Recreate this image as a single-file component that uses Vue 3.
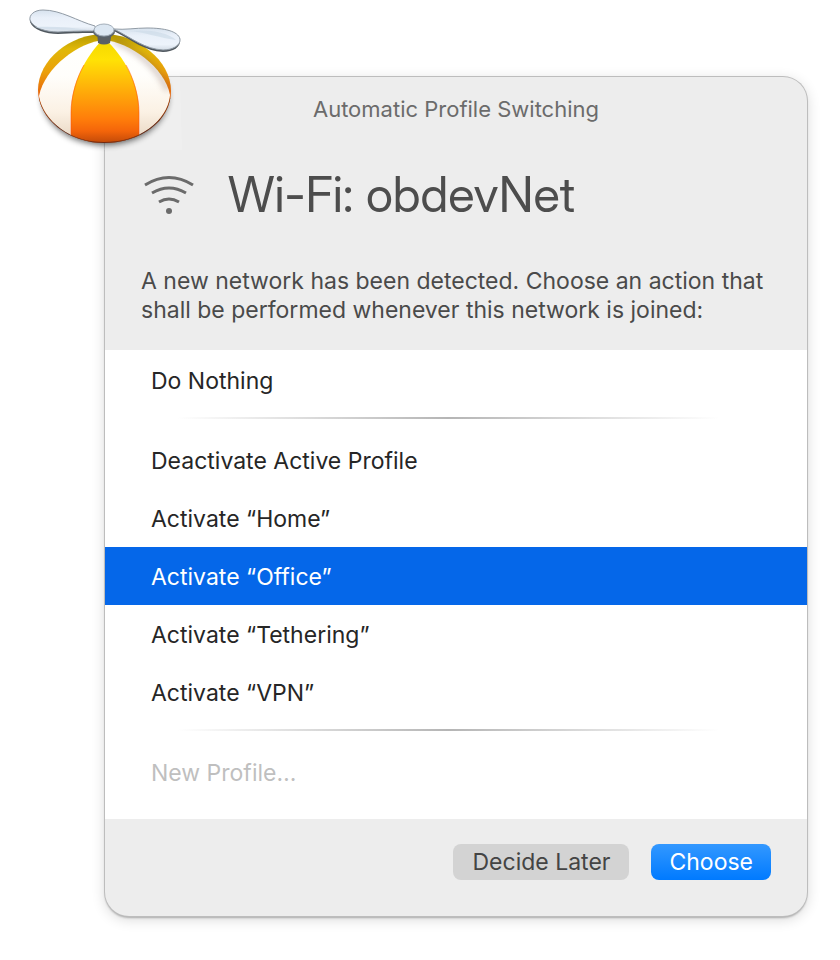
<script setup>
import { ref } from 'vue'

const groups = [
  [{ id: 'nothing', label: 'Do Nothing' }],
  [
    { id: 'deactivate', label: 'Deactivate Active Profile' },
    { id: 'home', label: 'Activate “Home”' },
    { id: 'office', label: 'Activate “Office”' },
    { id: 'tethering', label: 'Activate “Tethering”' },
    { id: 'vpn', label: 'Activate “VPN”' }
  ],
  [{ id: 'new', label: 'New Profile…', disabled: true }]
]

const selected = ref('office')
</script>

<template>
  <main class="desktop">
    <form class="dialog" @submit.prevent>
      <header class="dialog-header">
        <p class="caption">Automatic Profile Switching</p>
        <div class="network">
          <svg class="wifi" viewBox="0 0 52 42" aria-hidden="true">
            <g fill="none" stroke="#6b6b6b" stroke-width="3">
              <path d="M1 11 Q25 -4 49 11" />
              <path d="M8 19 Q25 9 42 19" />
              <path d="M15 28 Q25 22 35 28" />
            </g>
            <circle cx="25" cy="37" r="3" fill="#6b6b6b" />
          </svg>
          <h1>Wi-Fi: obdevNet</h1>
        </div>
        <p class="message">
          A new network has been detected. Choose an action that shall be performed whenever this network is joined:
        </p>
      </header>

      <div class="options" role="radiogroup" aria-label="Action">
        <div v-for="(group, index) in groups" :key="index" class="group">
          <label
            v-for="option in group"
            :key="option.id"
            class="option"
            :class="{ selected: selected === option.id, disabled: option.disabled }"
          >
            <input v-model="selected" type="radio" name="action" :value="option.id" :disabled="option.disabled">
            <span>{{ option.label }}</span>
          </label>
        </div>
      </div>

      <footer class="dialog-footer">
        <button type="button" class="btn">Decide Later</button>
        <button type="submit" class="btn primary">Choose</button>
      </footer>
    </form>

    <svg class="logo" viewBox="0 0 220 170" aria-hidden="true">
      <defs>
        <linearGradient id="stripe" x1="0" y1="0" x2="0" y2="1">
          <stop offset="0" stop-color="#f2d800" />
          <stop offset="0.2" stop-color="#ffe205" />
          <stop offset="0.45" stop-color="#ffb309" />
          <stop offset="0.75" stop-color="#ff7d0a" />
          <stop offset="0.86" stop-color="#f4650a" />
          <stop offset="1" stop-color="#b54208" />
        </linearGradient>
        <linearGradient id="side" x1="0" y1="0" x2="0" y2="1">
          <stop offset="0" stop-color="#ad9300" />
          <stop offset="0.15" stop-color="#e0b808" />
          <stop offset="0.35" stop-color="#eba00a" />
          <stop offset="0.55" stop-color="#e8640b" />
          <stop offset="1" stop-color="#6b3524" />
        </linearGradient>
        <linearGradient id="cream" x1="0" y1="0" x2="0" y2="1">
          <stop offset="0" stop-color="#ffffff" />
          <stop offset="0.35" stop-color="#fffefb" />
          <stop offset="0.7" stop-color="#fbf1e4" />
          <stop offset="1" stop-color="#e6d3be" />
        </linearGradient>
        <linearGradient id="blade" x1="0" y1="0" x2="0" y2="1">
          <stop offset="0" stop-color="#d7e2ee" />
          <stop offset="0.35" stop-color="#e9f0f9" />
          <stop offset="0.75" stop-color="#edf3fb" />
          <stop offset="1" stop-color="#d3dce6" />
        </linearGradient>
        <filter id="soft" x="-20%" y="-20%" width="140%" height="140%">
          <feGaussianBlur stdDeviation="3" />
        </filter>
        <clipPath id="dome">
          <path d="M104 34 C137 34 171 60 171 91 C171 121 140 143 104 143 C69 143 38 119 38 90 C38 60 70 34 104 34 Z" />
        </clipPath>
      </defs>
      <path d="M10 6 H178 L182 150 H16 Z" fill="#ffffff" opacity="0.15" />
      <ellipse cx="105" cy="97" rx="63" ry="48" fill="#000000" opacity="0.6" filter="url(#soft)" />
      <g clip-path="url(#dome)">
        <rect x="36" y="32" width="138" height="114" fill="url(#side)" />
        <path d="M104 40 C79 42 45 67 39 96 C43 120 70 143 104 143 C139 143 168 120 170 95 C165 67 129 42 104 40 Z" fill="url(#cream)" />
        <path d="M114 41 C135 48 158 67 168 90" fill="none" stroke="#725047" stroke-width="5" opacity="0.35" filter="url(#soft)" />
        <path d="M104 38 C85 57 71 84 71 112 L71 146 H139 V112 C139 84 125 57 104 38 Z" fill="url(#stripe)" />
        <path d="M71 134 V113 C71 96 77 77 84 65" fill="none" stroke="#ff4b0a" stroke-width="1" opacity="0.5" />
        <path d="M139 134 V113 C139 96 133 77 126 65" fill="none" stroke="#ff4b0a" stroke-width="1" opacity="0.5" />
        <path d="M38 98 C43 122 70 143 104 143 C140 143 167 122 171 98" fill="none" stroke="#4b1c16" stroke-width="2" opacity="0.7" />
      </g>
      <path d="M97 32 H112 L110 43 Q104 46 98 43 Z" fill="#5b6065" />
      <path d="M95 27 C77 21 61 11 43 11 C34 11 29 16 30 22 C33 30 46 34 58 34 C73 33 84 33 96 33 Z" fill="#4f575e" />
      <path d="M114 31 C133 41 145 51 163 52 C173 52 181 47 180 40 C178 32 164 29 147 29 C135 29 125 31 114 30 Z" fill="#4f575e" />
      <path d="M95 26 C77 21 61 10 43 10 C34 10 29 15 30 20 C33 28 46 32 58 32 C73 31 84 31 96 31 Z" fill="url(#blade)" stroke="#919ba5" stroke-width="1" />
      <path d="M114 29 C133 39 145 49 163 50 C173 50 181 45 180 39 C178 31 164 28 147 28 C135 28 125 30 114 29 Z" fill="url(#blade)" stroke="#919ba5" stroke-width="1" />
      <path d="M35 27 C48 31 68 29 90 30 C70 27 50 26 35 27 Z" fill="#cddbe8" opacity="0.7" />
      <path d="M128 31 C145 32 160 38 176 40 C168 32 148 29 128 31 Z" fill="#cddbe8" opacity="0.7" />
      <ellipse cx="104" cy="32" rx="11" ry="6" fill="#59626b" />
      <ellipse cx="104" cy="30" rx="10" ry="6" fill="#dce7f2" stroke="#a3aeb9" />
    </svg>
  </main>
</template>

<style>
body {
  margin: 0;
  background: #fff;
}
</style>

<style scoped>
.desktop {
  position: relative;
  padding: 77px 33px 43px 105px;
  font-family: Inter, "Liberation Sans", sans-serif;
  font-size: 23px;
  color: #262626;
}

.dialog {
  overflow: hidden;
  border-radius: 24px;
  background: #ededed;
  box-shadow: 0 0 0 1px #bdbdbd, 0 2px 2px rgba(0, 0, 0, 0.25), 0 3px 14px rgba(0, 0, 0, 0.16);
}

.dialog-header {
  padding: 18px 36px 25px;
}

p,
h1 {
  margin: 0;
}

.caption {
  text-align: center;
  font-size: 22px;
  line-height: 28px;
  color: #6b6b6b;
}

.network {
  display: flex;
  align-items: center;
  gap: 32px;
  margin: 40px 0;
  padding-left: 3px;
}

.wifi {
  width: 52px;
  height: 42px;
}

h1 {
  font-family: "Inter Display", Roboto, sans-serif;
  font-size: 49px;
  font-weight: 400;
  line-height: 64px;
  color: #4d4d4d;
}

.message {
  line-height: 29px;
  color: #4a4a4a;
}

.options {
  padding: 1px 0 18px;
  background: #fff;
}

.group + .group::before {
  content: "";
  display: block;
  height: 2px;
  margin: 8px 88px 12px 72px;
  background: linear-gradient(90deg, transparent, #b5b5b5 50%, transparent);
}

.option {
  display: flex;
  align-items: center;
  box-sizing: border-box;
  height: 58px;
  padding: 2px 46px 0;
}

.option input {
  appearance: none;
  width: 0;
  height: 0;
  margin: 0;
}

.option.selected {
  background: #0567e9;
  color: #fff;
}

.option.disabled {
  color: #bfbfbf;
}

.dialog-footer {
  display: flex;
  justify-content: flex-end;
  gap: 22px;
  padding: 25px 36px 36px;
}

.btn {
  height: 36px;
  padding: 0 19px;
  border: 0;
  border-radius: 8px;
  background: #d3d3d3;
  font-family: inherit;
  font-size: 23px;
  line-height: 36px;
  color: #444;
}

.btn.primary {
  padding: 0 18px;
  background: linear-gradient(#3398ff, #007aff);
  color: #fff;
}

.logo {
  position: absolute;
  top: 0;
  left: 0;
  width: 220px;
  height: 170px;
  pointer-events: none;
}
</style>
